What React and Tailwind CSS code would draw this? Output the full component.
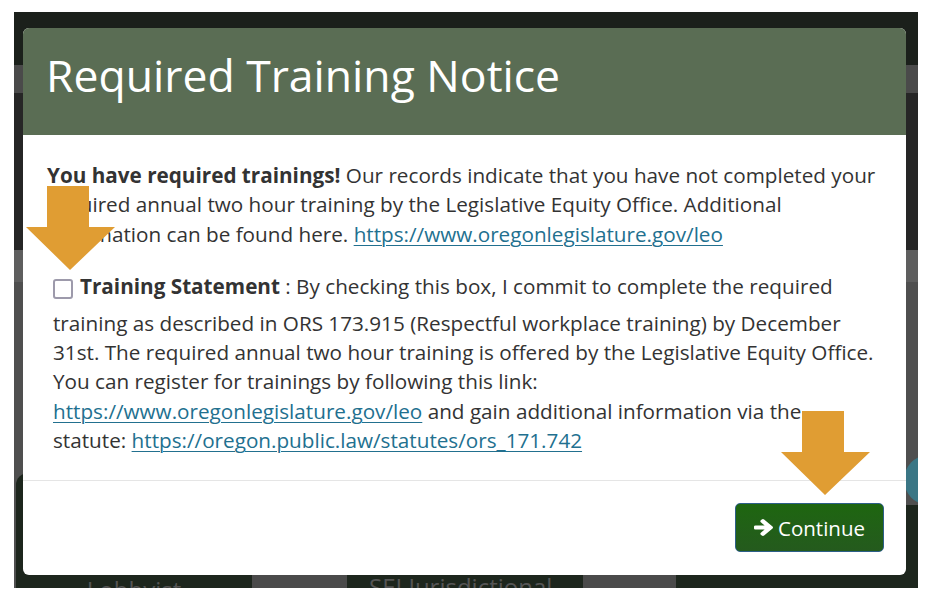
import React from "react";

const Link = ({ children }) => (
  <span className="text-[#22708f] underline decoration-1 underline-offset-[3px]">{children}</span>
);

function DownArrow({ className }) {
  return (
    <svg className={className} viewBox="0 0 90 85" width="90" height="85">
      <polygon points="21,0 63,0 63,41 89,41 44,84 0,41 21,41" fill="#e09d33" />
    </svg>
  );
}

function ArrowRight({ className }) {
  return (
    <svg className={className} viewBox="128 181 1472 1558" preserveAspectRatio="none" fill="currentColor">
      <path d="M1600 960q0 54-37 91l-651 651q-39 37-91 37-51 0-90-37l-75-75q-38-38-38-91t38-91l293-293h-704q-52 0-84.5-37.5t-32.5-90.5v-128q0-53 32.5-90.5t84.5-37.5h704l-293-294q-38-36-38-90t38-90l75-75q38-38 90-38 53 0 91 38l651 651q37 35 37 90z" />
    </svg>
  );
}

export default function App() {
  return (
    <div className="w-[926px] h-[605px] bg-white pt-[12px] pl-[14px] font-['Open_Sans',sans-serif] overflow-hidden">
      <div className="relative w-[904px] h-[576px] flex flex-col bg-[#4d4d4d] overflow-hidden">
        {/* dimmed page behind */}
        <div className="h-[53px] bg-[#1b201b]" />
        <div className="h-[28px] bg-[#4a4a4a]" />
        <div className="h-[157px] bg-[#262626]" />
        <div className="h-[32px] bg-[#5e5e5e]" />
        <div className="flex-1 flex items-end bg-[#4f4f4f]">
          <div className="ml-[2px] w-[236px] h-[115px] bg-[#1d261d] rounded-tl-[12px] flex items-end justify-center">
            <span className="text-[#555] text-[24px] leading-none translate-y-[14px]">Lobbyist</span>
          </div>
          <div className="w-[95px] h-[40px] bg-[#4a4a4a]" />
          <div className="w-[236px] h-[40px] bg-[#1d261d] flex items-end pl-[22px]">
            <span className="text-[#555] text-[24px] leading-none translate-y-[11px]">SEI Jurisdictional</span>
          </div>
          <div className="w-[93px] h-[40px] bg-[#4a4a4a]" />
          <div className="flex-1 h-[83px] bg-[#1d261d]" />
        </div>
        <div className="absolute left-[890px] top-[443px] w-[50px] h-[50px] rounded-full bg-[#3a7685] flex items-center justify-center text-[#aaa] text-[30px] leading-none">
          +
        </div>

        {/* modal */}
        <div className="absolute left-[9px] top-[16px] w-[883px] bg-white rounded-[6px] overflow-hidden flex flex-col">
          <div className="h-[107px] bg-[#5a6d54] flex items-center pl-[23px] pb-[12px]">
            <h1 className="text-white text-[44.5px] leading-none font-normal">Required Training Notice</h1>
          </div>
          <div className="pt-[26px] pb-[25px] pl-[24px] text-[#333] text-[20.7px] leading-[29.3px]">
            <div className="whitespace-nowrap"><b className="font-bold">You have required trainings!</b> Our records indicate that you have not completed your</div>
            <div className="whitespace-nowrap">required annual two hour training by the Legislative Equity Office. Additional</div>
            <div className="whitespace-nowrap">information can be found here. <Link>https://www.oregonlegislature.gov/leo</Link></div>
            <div className="mt-[23px] pl-[6px]">
              <div className="h-[37px] flex items-start whitespace-nowrap">
                <span className="mt-[7px] mr-[7px] w-[20px] h-[20px] border-2 border-[#9d9aab] rounded-[3px] bg-white shrink-0" />
                <span><b className="font-bold">Training Statement</b> : By checking this box, I commit to complete the required</span>
              </div>
              <div className="whitespace-nowrap">training as described in ORS 173.915 (Respectful workplace training) by December</div>
              <div className="whitespace-nowrap">31st. The required annual two hour training is offered by the Legislative Equity Office.</div>
              <div className="whitespace-nowrap">You can register for trainings by following this link:</div>
              <div className="whitespace-nowrap"><Link>https://www.oregonlegislature.gov/leo</Link> and gain additional information via the</div>
              <div className="whitespace-nowrap">statute: <Link>https://oregon.public.law/statutes/ors_171.742</Link></div>
            </div>
          </div>
          <div className="border-t border-[#e5e5e5] pt-[22px] pb-[23px] pr-[22px] flex justify-end">
            <button className="w-[149px] h-[49px] rounded-[5px] border border-[#2d5f88] bg-gradient-to-b from-[#1e660f] to-[#245a1d] text-white text-[20.5px] flex items-center justify-center gap-[5px]">
              <ArrowRight className="w-[19px] h-[17px]" />
              <span>Continue</span>
            </button>
          </div>
        </div>

        {/* annotation arrows */}
        <DownArrow className="absolute left-[12px] top-[174px]" />
        <DownArrow className="absolute left-[767px] top-[399px]" />
      </div>
    </div>
  );
}
